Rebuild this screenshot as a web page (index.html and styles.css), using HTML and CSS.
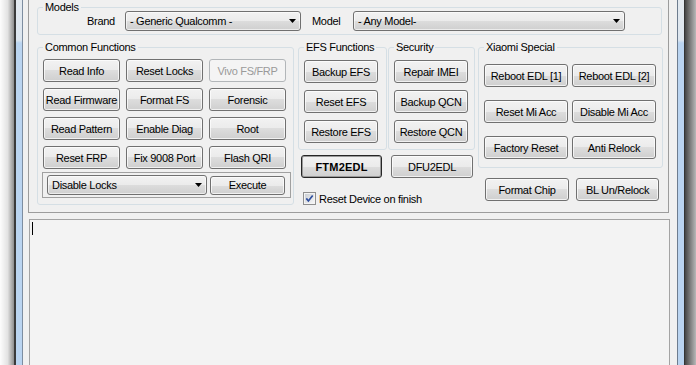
FILE: index.html
```html
<!DOCTYPE html>
<html lang="en">
<head>
    <meta charset="UTF-8">
    <meta name="viewport" content="width=device-width, initial-scale=1.0">
    <title>Qualcomm Tool</title>
    <link rel="stylesheet" href="styles.css">
</head>
<body>
<div class="window">
    <div class="shadow-left"></div>
    <div class="frame frame-left"></div>

    <div class="client">
        <div class="panel">
            <fieldset class="group models">
                <legend>Models</legend>
                <div class="models-row">
                    <span class="label brand-label">Brand</span>
                    <div class="combo brand-combo">
                        <span>- Generic Qualcomm -</span>
                        <svg width="7" height="4" viewBox="0 0 7 4"><path d="M0 0h7L3.5 4z" fill="#000"/></svg>
                    </div>
                    <span class="label model-label">Model</span>
                    <div class="combo model-combo">
                        <span>- Any Model-</span>
                        <svg width="7" height="4" viewBox="0 0 7 4"><path d="M0 0h7L3.5 4z" fill="#000"/></svg>
                    </div>
                </div>
            </fieldset>

            <div class="functions">
                <fieldset class="group common">
                    <legend>Common Functions</legend>
                    <div class="common-grid">
                        <button class="btn">Read Info</button>
                        <button class="btn">Reset Locks</button>
                        <button class="btn" disabled>Vivo FS/FRP</button>
                        <button class="btn">Read Firmware</button>
                        <button class="btn">Format FS</button>
                        <button class="btn">Forensic</button>
                        <button class="btn">Read Pattern</button>
                        <button class="btn">Enable Diag</button>
                        <button class="btn">Root</button>
                        <button class="btn">Reset FRP</button>
                        <button class="btn">Fix 9008 Port</button>
                        <button class="btn">Flash QRI</button>
                    </div>
                    <div class="lock-box">
                        <div class="combo lock-combo">
                            <span>Disable Locks</span>
                            <svg width="7" height="4" viewBox="0 0 7 4"><path d="M0 0h7L3.5 4z" fill="#000"/></svg>
                        </div>
                        <button class="btn execute">Execute</button>
                    </div>
                </fieldset>

                <div class="middle">
                    <div class="middle-groups">
                        <fieldset class="group efs">
                            <legend>EFS Functions</legend>
                            <div class="stack">
                                <button class="btn">Backup EFS</button>
                                <button class="btn">Reset EFS</button>
                                <button class="btn">Restore EFS</button>
                            </div>
                        </fieldset>
                        <fieldset class="group security">
                            <legend>Security</legend>
                            <div class="stack">
                                <button class="btn">Repair IMEI</button>
                                <button class="btn">Backup QCN</button>
                                <button class="btn">Restore QCN</button>
                            </div>
                        </fieldset>
                    </div>
                    <div class="edl-row">
                        <button class="btn btn-default ftm">FTM2EDL</button>
                        <button class="btn dfu">DFU2EDL</button>
                    </div>
                    <label class="check-row">
                        <svg width="13" height="13" viewBox="0 0 13 13">
                            <defs>
                                <linearGradient id="cbg" x1="0" y1="0" x2="1" y2="1">
                                    <stop offset="0" stop-color="#cbcfd5"/>
                                    <stop offset="1" stop-color="#f6f6f6"/>
                                </linearGradient>
                            </defs>
                            <rect x="0.5" y="0.5" width="12" height="12" fill="#f4f4f4" stroke="#8f8f8f"/>
                            <rect x="2" y="2" width="9" height="9" fill="url(#cbg)"/>
                            <path d="M3.3 6.4L5.4 9L9.7 3.4" fill="none" stroke="#2f4f9f" stroke-width="1.7"/>
                        </svg>
                        <span>Reset Device on finish</span>
                    </label>
                </div>

                <div class="right-col">
                    <fieldset class="group xiaomi">
                        <legend>Xiaomi Special</legend>
                        <div class="xiaomi-grid">
                            <button class="btn">Reboot EDL [1]</button>
                            <button class="btn">Reboot EDL [2]</button>
                            <button class="btn">Reset Mi Acc</button>
                            <button class="btn">Disable Mi Acc</button>
                            <button class="btn">Factory Reset</button>
                            <button class="btn">Anti Relock</button>
                        </div>
                    </fieldset>
                    <div class="chip-row">
                        <button class="btn format-chip">Format Chip</button>
                        <button class="btn bl-relock">BL Un/Relock</button>
                    </div>
                </div>
            </div>
        </div>

        <!-- log output -->
        <div class="log"><span class="caret"></span></div>
    </div>

    <div class="frame frame-right"></div>
    <div class="shadow-right"></div>
</div>
</body>
</html>
```

FILE: styles.css
```css
* {
    margin: 0;
    padding: 0;
    box-sizing: border-box;
}

body {
    overflow: hidden;
    background: #fff;
    font-family: "Liberation Sans", Tahoma, Arial, sans-serif;
    font-size: 11px;
    letter-spacing: -0.3px;
    color: #000;
}

.window {
    display: flex;
    height: 365px;
}

/* window chrome */
.shadow-left {
    width: 14px;
    background: linear-gradient(to right, #fdfdfd, #e2e2e2 55%, #8e8e8e);
}

.shadow-right {
    width: 11px;
    background: linear-gradient(to right, #454545, #7a7a7a 45%, #b8b8b8);
}

.frame {
    width: 6px;
    background: linear-gradient(#e3e9ef 0, #dde6ef 40px, #bad4f0 43px, #bad4f0);
    box-sizing: content-box;
}

.frame-left {
    border-left: 2px solid #3a3a3a;
    border-right: 1px solid #7d8da0;
}

.frame-right {
    border-left: 1px solid #6d7c8e;
    border-right: 1px solid #343434;
}

.client {
    width: 654px;
    display: flex;
    flex-direction: column;
    background: #f0f0f0;
}

.panel {
    margin-left: 5px;
    width: 641px;
    padding-bottom: 7px;
    border: 1px solid #9c9c9c;
    border-top: none;
}

/* group boxes */
.group {
    border: 1px solid #d5dfe5;
    border-radius: 3px;
    padding: 0 5px 0 5px;
    min-width: 0;
}

.group legend {
    padding: 0 2px;
    line-height: 13px;
}

.models {
    margin: 1px 0 0 8px;
    width: 625px;
    padding-bottom: 3px;
}

.models-row {
    display: flex;
    align-items: center;
    margin-top: -3px;
    height: 20px;
}

.brand-label {
    margin-left: 44px;
    width: 38px;
}

.brand-combo {
    width: 176px;
}

.model-label {
    margin-left: 11px;
    width: 41px;
}

.model-combo {
    width: 272px;
}

.combo {
    height: 20px;
    display: flex;
    align-items: center;
    justify-content: space-between;
    padding: 0 4px 0 4px;
    border: 1px solid #707070;
    border-radius: 3px;
    background: linear-gradient(#f2f2f2 0%, #ebebeb 50%, #dddddd 50%, #cfcfcf 100%);
    box-shadow: inset 0 0 0 1px rgba(255, 255, 255, 0.6);
}

.functions {
    display: flex;
    align-items: flex-start;
    margin: 6px 0 0 8px;
}

.btn {
    height: 23px;
    padding: 0;
    border: 1px solid #707070;
    border-radius: 3px;
    background: linear-gradient(#f2f2f2 0%, #ebebeb 50%, #dddddd 50%, #cfcfcf 100%);
    box-shadow: inset 0 0 0 1px rgba(255, 255, 255, 0.7);
    font-family: inherit;
    font-size: 11px;
    letter-spacing: -0.3px;
    color: #000;
    white-space: nowrap;
}

.btn:disabled {
    color: #9a9a9a;
    border-color: #b2b6b9;
    background: #f4f4f4;
    box-shadow: none;
}

.btn-default {
    border-color: #262626;
    box-shadow: inset 0 0 0 1px #9a9a9a;
    font-weight: bold;
    letter-spacing: 0.2px;
}

.common {
    width: 257px;
    padding: 0 2px 6px 5px;
}

.common-grid {
    display: grid;
    grid-template-columns: 77px 77px 77px;
    grid-auto-rows: 23px;
    gap: 6px;
    margin-top: 5px;
}

.lock-box {
    display: flex;
    align-items: center;
    gap: 3px;
    margin: 3px 0 0 -1px;
    height: 26px;
    padding-left: 4px;
    border: 1px solid #a0a0a0;
}

.lock-combo {
    width: 160px;
}

.execute {
    width: 75px;
    height: 19px;
}

.middle {
    margin-left: 4px;
    display: flex;
    flex-direction: column;
}

.middle-groups {
    display: flex;
    gap: 1px;
}

.efs {
    width: 89px;
    padding: 0 8px 6px 5px;
}

.security {
    width: 87px;
    padding: 0 6px 6px 5px;
}

.stack {
    display: flex;
    flex-direction: column;
    gap: 7px;
    margin-top: 6px;
}

.stack .btn {
    width: 74px;
}

.edl-row {
    display: flex;
    margin-top: 5px;
}

.ftm {
    width: 81px;
    margin-left: 3px;
}

.dfu {
    width: 82px;
    margin-left: 9px;
}

.check-row {
    display: flex;
    align-items: center;
    gap: 3px;
    margin: 14px 0 0 5px;
    height: 13px;
}

.right-col {
    margin-left: 3px;
    display: flex;
    flex-direction: column;
}

.xiaomi {
    width: 185px;
    padding: 0 6px 8px 5px;
}

.xiaomi-grid {
    display: grid;
    grid-template-columns: 84px 84px;
    grid-auto-rows: 23px;
    column-gap: 4px;
    row-gap: 13px;
    margin-top: 10px;
}

.chip-row {
    display: flex;
    margin-top: 10px;
}

.format-chip {
    width: 84px;
    margin-left: 7px;
}

.bl-relock {
    width: 83px;
    margin-left: 7px;
}

.log {
    flex: 1;
    margin: 6px 0 0 6px;
    width: 641px;
    padding: 2px;
    border: 1px solid #a3a3a3;
    border-bottom: none;
    background: #f3f3f3;
}

.caret {
    display: block;
    width: 1px;
    height: 13px;
    background: #000;
}
```
